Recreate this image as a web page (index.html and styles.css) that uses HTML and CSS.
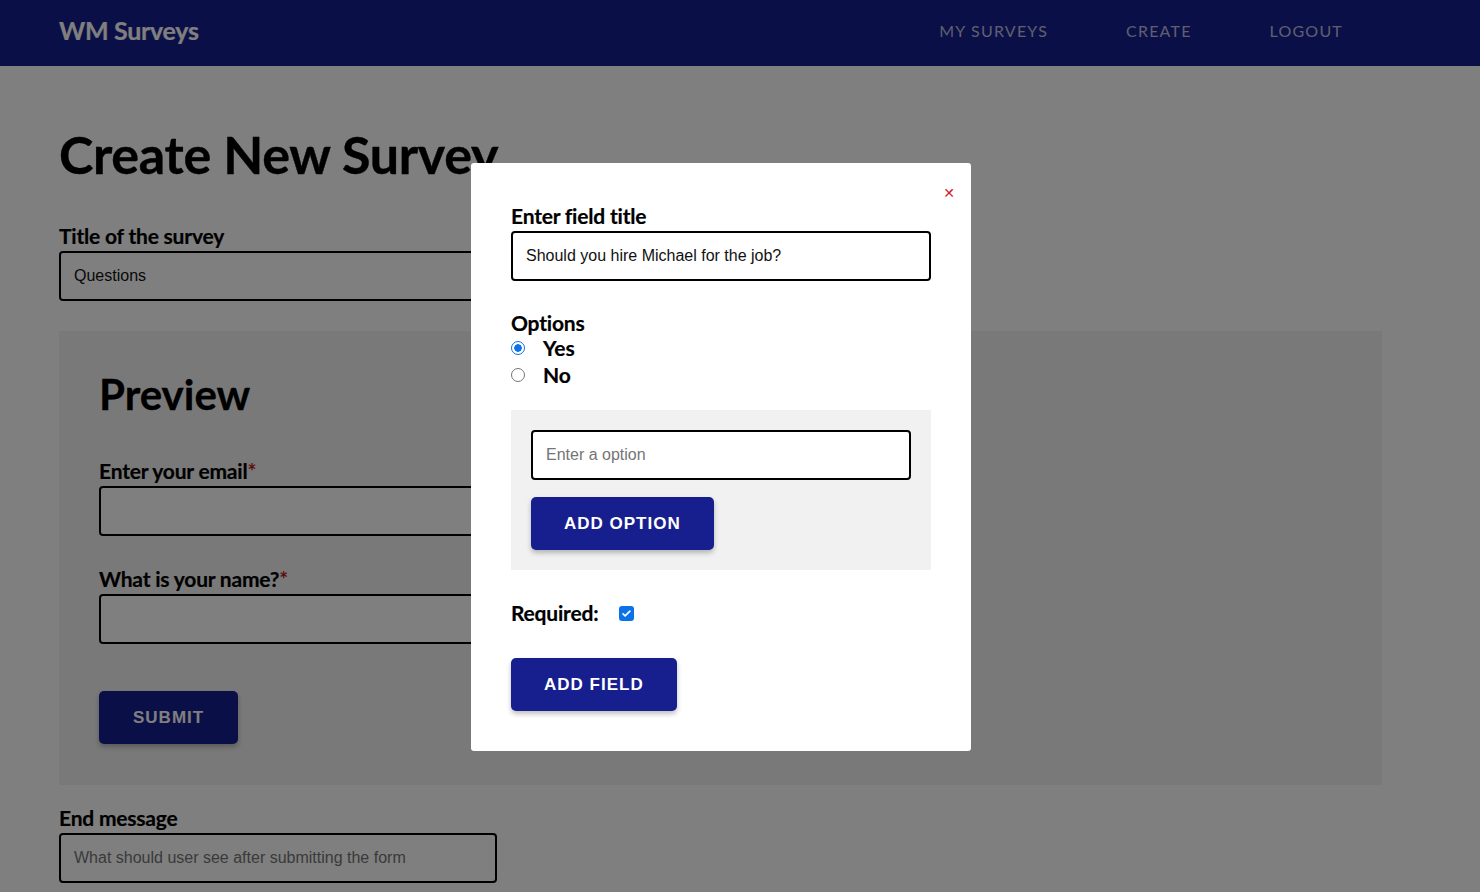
FILE: index.html
```html
<!DOCTYPE html>
<html>
<head>
<meta charset="utf-8">
<link rel="stylesheet" href="styles.css">
</head>
<body>
<header class="topbar">
  <div class="logo">WM Surveys</div>
  <nav class="nav">
    <a>My Surveys</a>
    <a>Create</a>
    <a>Logout</a>
  </nav>
</header>
<main class="page">
  <h1 class="page-title">Create New Survey</h1>
  <label class="label">Title of the survey</label>
  <div class="input short">Questions</div>
  <section class="preview">
    <h2 class="preview-title">Preview</h2>
    <label class="label">Enter your email<span class="req">*</span></label>
    <div class="input wide"></div>
    <label class="label second">What is your name?<span class="req">*</span></label>
    <div class="input wide"></div>
    <button class="btn submit">Submit</button>
  </section>
  <label class="label">End message</label>
  <div class="input short placeholder">What should user see after submitting the form</div>
</main>
<div class="overlay"></div>
<div class="modal">
  <button class="close">&#x2715;</button>
  <label class="label">Enter field title</label>
  <div class="input full">Should you hire Michael for the job?</div>
  <div class="label options-label">Options</div>
  <div class="radio-row"><span class="radio on"></span><span class="radio-text">Yes</span></div>
  <div class="radio-row"><span class="radio"></span><span class="radio-text">No</span></div>
  <div class="option-panel">
    <div class="input full placeholder">Enter a option</div>
    <button class="btn">Add Option</button>
  </div>
  <div class="required-row">
    <span class="label inline">Required:</span>
    <span class="checkbox"><svg viewBox="0 0 16 16" width="11" height="11"><path d="M3 8.5l3 3 7-7" fill="none" stroke="#fff" stroke-width="2.4" stroke-linecap="round" stroke-linejoin="round"/></svg></span>
  </div>
  <button class="btn add-field">Add Field</button>
</div>
</body>
</html>
```
FILE: styles.css
```css
* { box-sizing: border-box; }
html, body { margin: 0; padding: 0; }
body {
  background: #fff;
  font-family: Lato, "Liberation Sans", sans-serif;
  color: #000;
  height: 892px;
  overflow: hidden;
}
.topbar {
  height: 66px;
  background: #171e8e;
  display: flex;
  align-items: center;
  padding: 0 59px;
}
.logo {
  font-weight: 700;
  font-size: 25px;
  color: #fff;
  margin-top: -7px;
  letter-spacing: -0.3px;
  -webkit-text-stroke: 0.2px #fff;
}
.nav {
  margin-left: auto;
  display: flex;
  gap: 78px;
  padding-right: 78px;
  margin-top: -5px;
}
.nav a {
  color: rgba(255,255,255,0.72);
  text-transform: uppercase;
  font-size: 16px;
  letter-spacing: 1.2px;
}
.page {
  padding: 60px 59px 0;
}
.page-title {
  margin: 0 0 40px;
  font-size: 52px;
  font-weight: 700;
  line-height: 1.1;
  letter-spacing: -0.3px;
  -webkit-text-stroke: 0.4px #000;
}
.label {
  display: block;
  font-weight: 700;
  font-size: 21px;
  line-height: 26px;
  letter-spacing: -0.2px;
  margin-bottom: 2px;
  -webkit-text-stroke: 0.2px #000;
}
.req { color: #c2181f; -webkit-text-stroke: 0; }
.input {
  height: 50px;
  border: 2px solid #000;
  border-radius: 4px;
  background: #fff;
  font-family: "Liberation Sans", Arial, sans-serif;
  font-size: 16px;
  display: flex;
  align-items: center;
  padding: 0 13px;
  color: #111;
}
.input.placeholder { color: #757575; }
.input.short { width: 438px; }
.input.wide { width: 760px; }
.input.full { width: 100%; }
.preview {
  margin: 30px 0 20px;
  background: #f2f2f2;
  width: 1323px;
  height: 454px;
  padding: 40px 40px;
}
.preview-title {
  margin: 0 0 41px;
  font-size: 42px;
  font-weight: 700;
  line-height: 1.1;
  -webkit-text-stroke: 0.3px #000;
}
.preview .second { margin-top: 30px; }
.btn {
  display: block;
  border: none;
  background: #171e8e;
  color: #fff;
  font-family: "Liberation Sans", Arial, sans-serif;
  font-weight: 700;
  font-size: 17px;
  letter-spacing: 1px;
  text-transform: uppercase;
  height: 53px;
  padding: 0 33px;
  border-radius: 5px;
  box-shadow: 0 3px 5px rgba(0,0,0,0.25);
}
.submit { margin-top: 47px; padding: 0 34px; }
.overlay {
  position: fixed;
  inset: 0;
  background: rgba(0,0,0,0.5);
}
.modal {
  position: fixed;
  left: 471px;
  top: 163px;
  width: 500px;
  height: 588px;
  background: #fff;
  border-radius: 3px;
  padding: 40px 40px;
}
.close {
  position: absolute;
  top: 20px;
  right: 14px;
  border: none;
  background: none;
  color: #d21b2b;
  font-size: 14px;
  font-family: "DejaVu Sans", sans-serif;
  padding: 2px;
}
.options-label { margin-top: 31px; margin-bottom: 0; line-height: 22px; }
.radio-row {
  display: flex;
  align-items: center;
  height: 27px;
}
.radio-row .radio-text {
  font-weight: 700;
  font-size: 21px;
  margin-left: 18px;
  -webkit-text-stroke: 0.2px #000;
}
.radio {
  width: 14px;
  height: 14px;
  border-radius: 50%;
  border: 1px solid #767676;
  background: #fff;
  margin-left: 0;
}
.radio.on {
  border: 1px solid #0b72e7;
  background: radial-gradient(circle, #0b72e7 0 3.5px, #fff 4px);
}
.option-panel {
  margin-top: 22px;
  background: #f1f1f1;
  padding: 20px 20px;
  height: 160px;
}
.option-panel .btn { margin-top: 17px; }
.required-row {
  display: flex;
  align-items: center;
  margin-top: 30px;
}
.label.inline { display: inline; margin: 0; }
.checkbox {
  width: 15px;
  height: 15px;
  border-radius: 3px;
  background: #0b72e7;
  margin-left: 21px;
  display: flex;
  align-items: center;
  justify-content: center;
}
.add-field { margin-top: 32px; padding: 0 33px; }
```
